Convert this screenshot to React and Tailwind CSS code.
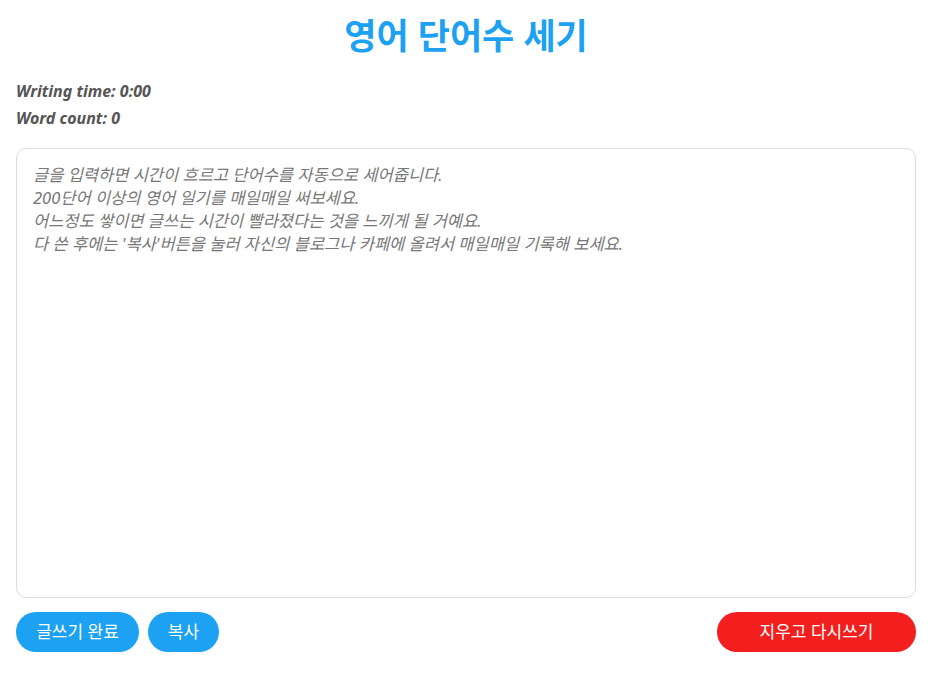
import React, { useState } from "react";

const placeholder = `글을 입력하면 시간이 흐르고 단어수를 자동으로 세어줍니다.
200단어 이상의 영어 일기를 매일매일 써보세요.
어느정도 쌓이면 글쓰는 시간이 빨라졌다는 것을 느끼게 될 거예요.
다 쓴 후에는 '복사'버튼을 눌러 자신의 블로그나 카페에 올려서 매일매일 기록해 보세요.`;

const App = () => {
  const [text, setText] = useState("");
  const words = text.trim() ? text.trim().split(/\s+/).length : 0;

  return (
    <div
      className="px-4 pt-[10px] bg-white min-h-screen"
      style={{ fontFamily: '"Noto Sans", "Noto Sans CJK KR", sans-serif' }}
    >
      <h1 className="text-center text-[35px] font-bold text-[#1da1f2] leading-[52px]">
        영어 단어수 세기
      </h1>
      <div className="mt-[16px] text-[16px] font-bold italic text-[#555] leading-[27px]">
        <p>Writing time: 0:00</p>
        <p>Word count: {words}</p>
      </div>
      <textarea
        value={text}
        onChange={e => setText(e.target.value)}
        placeholder={placeholder}
        className="mt-[16px] block w-full h-[450px] border border-[#ddd] rounded-[10px] px-4 pt-[14px] pb-3 text-[16.5px] leading-[23px] italic placeholder:text-[#777] text-[#333] resize-none outline-none"
      />
      <div className="mt-[14px] flex items-center">
        <button className="h-10 w-[123px] rounded-full bg-[#1da1f2] text-white text-[17px]">
          글쓰기 완료
        </button>
        <button className="ml-[9px] h-10 w-[71px] rounded-full bg-[#1da1f2] text-white text-[17px]">
          복사
        </button>
        <button className="ml-auto h-10 w-[199px] rounded-full bg-[#f31e1e] text-white text-[17px]">
          지우고 다시쓰기
        </button>
      </div>
    </div>
  );
};

export default App;
